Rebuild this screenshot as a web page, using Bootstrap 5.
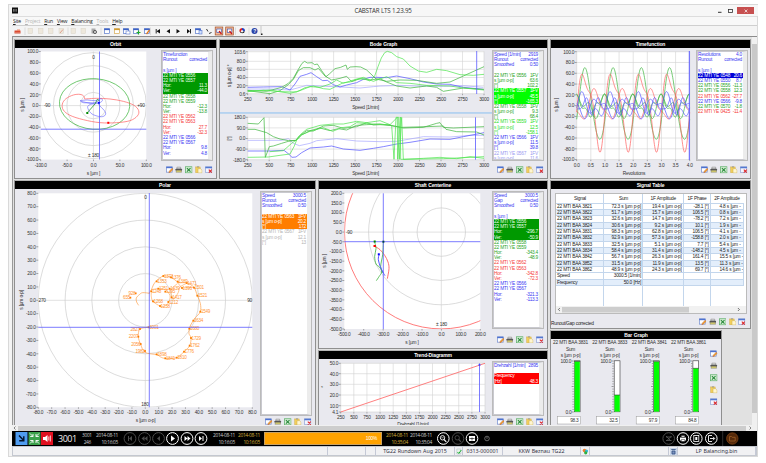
<!DOCTYPE html>
<html lang="en">
<head>
<meta charset="utf-8">
<title>CABSTAR LTS 1.23.95</title>
<link href="https://cdn.jsdelivr.net/npm/bootstrap@5.3.0/dist/css/bootstrap.min.css" rel="stylesheet">
<style>
html,body{width:766px;height:463px;overflow:hidden;background:#fff}
body{font-family:"Liberation Sans",Arial,sans-serif;font-size:4.8px;line-height:5.2px;letter-spacing:-.25px;word-spacing:.35px;color:#222}
svg{display:block;flex:none}
svg text{font-size:4.8px;letter-spacing:-.25px;word-spacing:.35px;fill:#333}
.win{width:750px;height:453px;margin:4px 0 0 8px;border:1px solid #d9d9d9;background:#f4f4f4;padding:0 0 0 3px}
.titlebar{height:11px;background:#f7f7f7;width:746px}
.titlebar .ttl{font:6.2px/11px "Open Sans","Noto Sans",sans-serif;letter-spacing:-.22px;color:#333}
.closebtn{width:17px;height:7px;background:#c75050}
.menus{height:9px;font:5.1px/9px "Open Sans",sans-serif;letter-spacing:-.18px;gap:3.9px;padding-left:1px;border-top:1px solid #ddd;background:#f8f8f8}
.menus u{text-decoration-thickness:.4px;text-underline-offset:.5px}
.tools{height:11px;border-top:1px solid #cfcfcf;background:#f4f4f4}
.work{height:389px;background:#e1e1e1;border-top:1px solid #8c8c8c;border-left:1px solid #999;width:745px;overflow:hidden}
.canvas{padding:2px 0 0 1px;gap:2px;width:739px;height:388px;overflow:hidden}
.pane{border:1px solid #8f8f8f;border-top-color:#b5b5b5;background:#e9e9ef;overflow:hidden;flex:none}
.hd{height:8px;background:#000;color:#fff;text-align:center;font:bold 5px/8px "Liberation Sans",sans-serif;letter-spacing:-.15px;flex:none}
.side{width:55px;padding:2.5px 4px 0 1px;flex:none}
.lgd{width:50px;background:#fff;border:1px solid #c9c9cf;border-right:4px solid #ececec;overflow:hidden;padding-top:.5px;flex:none;outline:.5px solid #bbb}
.lgd div{display:flex;justify-content:space-between;height:5.2px;padding:0 1px 0 0;white-space:nowrap}
.ics{gap:2.3px;padding:0 1px 0 3.5px}
.b{color:#3a3af2}.g{color:#2aa52a}.lg{color:#2ddd2d}.r{color:#f53c3c}.v{color:#9a9af0}.gy{color:#b4b4b4}
.hg{background:#090;color:#e8ffe8}.hl{background:#0f0;color:#fff}.hb{background:#0000d8;color:#fff}.ho{background:#ff7d00;color:#fff}.hr{background:#f00;color:#fff}
.vs{width:5px;background:#c9c9c9;border-top:7px solid #f0f0f0;border-bottom:12px solid #f0f0f0;flex:none}
.hs{height:6px;background:#f0f0f0;width:745px;font-size:5px;line-height:6px}
.hs .thumb{height:5px;background:#cdcdcd;width:728px}
.blackbar{height:15px;background:#000;width:745px;color:#ccc;letter-spacing:-.25px}
.blackbar>*{flex:none}
.blackbar .num{font:9px/15px "Open Sans",sans-serif;color:#eee;letter-spacing:-.5px;width:24px}
.stamp{font:4.8px/6.5px "Open Sans",sans-serif;letter-spacing:-.3px;text-align:right;white-space:nowrap;width:22px}
.s1{width:9px}.s2{width:22px;margin:0 4px 0 5px}.s3{margin-left:1px}.s4{margin:0 4px 0 3px}.s5{margin:0 2px 0 4px}.s6{margin-right:2px}
.gold{color:#d9b13a}
.prog{width:118px;height:13px;background:#ffa200;border:1px solid #c9a264;color:#fff;text-align:right}
.status{height:10px;background:#f1f1f3;width:745px;font:5.3px/9px "Noto Sans",sans-serif;letter-spacing:0;border:1px solid #c4c8d0;color:#334}
.status>div{border-right:1px solid #c5c9d6;height:8px;text-align:center;white-space:nowrap;flex:none;display:flex;align-items:center;justify-content:center}
.tbl{margin:4px 0 0 4px;width:192px;height:121px;background:#fff;border:1px solid #bbb;flex:none}
.sig{width:188px;height:112px;overflow:hidden;background:linear-gradient(90deg,#0000 47.4px,#c3d6ec 47.4px 48px,#0000 48px 86.4px,#c3d6ec 86.4px 87px,#0000 87px 126.9px,#c3d6ec 126.9px 127.5px,#0000 127.5px 153.9px,#c3d6ec 153.9px 154.5px,#0000 154.5px)}
.sig tr{display:grid;grid-template-columns:48px 39px 40.5px 27px 33px;height:6.36px;border-bottom:.6px solid #c3d6ec}
.sig td,.sig th{padding:0 1px;text-align:right;font-weight:400;white-space:nowrap;overflow:hidden;line-height:6px;border-right:1px solid #c3d6ec}
.sig th{text-align:center;line-height:10px;border:0}
.sig tr.h{height:9.5px}
.sig td:first-child{text-align:left}
.sig td:last-child{text-align:left;padding-left:9px}
.sig .alt td{background:#e3eefb}
#topRow,#lowRow{gap:2px}
#orbit{width:203px;height:140px}#bode{width:329px;height:140px}#timef{width:201px;height:140px}
#polar{width:302px;height:247px}#shaft{width:230px;height:169px}#trend{width:230px;height:77px}
#signal{width:201px;height:149px;margin-top:1px}#bars{width:172px;height:97px;margin-top:1px}
#sigfoot span{align-self:flex-end;padding-top:7px}
#sigfoot .ics{padding:4px 4px 0 0}
.baricons{gap:4.4px;padding:11px 0 0 1px}
</style>
<script src="https://cdn.jsdelivr.net/npm/bootstrap@5.3.0/dist/js/bootstrap.bundle.min.js"></script>
</head>
<body>
<svg width="0" height="0" class="position-absolute"><defs>
<symbol id="i-edit" viewBox="0 0 8 8"><rect x=".5" y="1" width="6" height="5.5" fill="#fff" stroke="#6a86cc" stroke-width=".7"/><rect x=".3" y=".7" width="6.5" height="1.6" fill="#4d72d0"/><path d="M3 7l.4-1.600L6.400 2.400l1.200 1.100-3 3z" fill="#f0a030" stroke="#b8552c" stroke-width=".4"/></symbol>
<symbol id="i-print" viewBox="0 0 8 8"><path d="M2 1.200h4v2H2z" fill="#ddd" stroke="#777" stroke-width=".5"/><rect x=".6" y="2.800" width="6.800" height="2.200" rx=".6" fill="#555"/><path d="M1.500 4.600h5l.5 2h-6z" fill="#d8cf6a" stroke="#666" stroke-width=".4"/></symbol>
<symbol id="i-xls" viewBox="0 0 8 8"><rect x=".6" y=".8" width="6.800" height="6.400" fill="#d8efd8" stroke="#5fb06a" stroke-width=".8"/><path d="M2 2.200l3.800 3.800M5.800 2.200L2 6" stroke="#2b8a3c" stroke-width="1.200"/></symbol>
<symbol id="i-clip" viewBox="0 0 8 8"><rect x=".8" y="1" width="4.600" height="6" fill="#f3cf5a" stroke="#d0aa3a" stroke-width=".5"/><rect x="2" y=".4" width="2.200" height="1.100" fill="#999"/><path d="M3.200 2.800h2.600l1.600 1.500v3H3.200z" fill="#fff6d0" stroke="#c9b05a" stroke-width=".5"/></symbol>
<symbol id="i-del" viewBox="0 0 8 8"><rect x=".6" y="1" width="6.600" height="5.600" fill="#f4f6ff" stroke="#7d94d0" stroke-width=".6"/><rect x=".4" y=".7" width="7" height="1.700" fill="#5478d0"/><path d="M4 3.800l3.200 3.200M7.200 3.800L4 7" stroke="#e02828" stroke-width="1.100"/></symbol>
</defs></svg>

<div class="win d-flex flex-column">
  <div class="titlebar d-flex align-items-center">
    <svg width="6" height="7" viewBox="0 0 6 7" class="flex-shrink-0"><rect y=".5" width="6" height="6" fill="#111"/><path d="M1 2.800h4M1 4h4" stroke="#ddd" stroke-width=".7" stroke-dasharray="1 .4"/></svg>
    <div class="ttl flex-fill text-center ps-4 ms-2">CABSTAR LTS 1.23.95</div>
    <svg width="21" height="8" viewBox="0 0 21 8"><path d="M2 5.300h3.500" stroke="#333"/><rect x="12.500" y="2.500" width="4" height="3" fill="none" stroke="#333" stroke-width=".8"/></svg>
    <div class="closebtn d-flex align-items-center justify-content-center me-1"><svg width="4" height="4" viewBox="0 0 4 4"><path d="M.6.6l2.800 2.800M3.400.6L.6 3.400" stroke="#fff" stroke-width=".7"/></svg></div>
  </div>
  <div class="menus d-flex"><span><u>S</u>ite</span><span class="gy"><u>P</u>roject</span><span><u>R</u>un</span><span><u>V</u>iew</span><span><u>B</u>alancing</span><span class="gy"><u>T</u>ools</span><span><u>H</u>elp</span></div>
  <div class="tools"><svg id="tb" width="260" height="11" viewBox="12 25 260 11"></svg></div>

  <div class="work d-flex">
    <div class="canvas d-flex">
      <div class="d-flex flex-column flex-shrink-0" style="gap:1px">
        <div class="d-flex" id="topRow">
          <section class="pane" id="orbit"></section>
          <section class="pane" id="bode"></section>
        </div>
        <div class="d-flex" id="lowRow">
          <section class="pane" id="polar"></section>
          <div class="d-flex flex-column" style="gap:1px">
            <section class="pane" id="shaft"></section>
            <section class="pane" id="trend"></section>
          </div>
        </div>
      </div>
      <div class="d-flex flex-column flex-shrink-0">
        <section class="pane" id="timef"></section>
        <section class="pane" id="signal">
          <div class="hd">Signal Table</div>
          <div class="tbl">
            <div class="sig"><table><tbody id="rows"></tbody></table></div>
            <svg width="190" height="7" viewBox="0 0 190 7"><rect width="190" height="7" fill="#f1f1f1"/><rect x="6" y="1" width="127" height="5.500" fill="#cdcdcd"/><path d="M3.800 2.100L2.400 3.500l1.400 1.400M182 2.100l1.400 1.400-1.400 1.400" fill="none" stroke="#444" stroke-width=".8"/></svg>
          </div>
          <div class="d-flex justify-content-between" id="sigfoot"><span>Runout/Gap corrected</span></div>
        </section>
        <section class="pane" id="bars"></section>
      </div>
    </div>
    <div class="vs"></div>
  </div>
  <div class="hs d-flex align-items-center"><svg width="6" height="6" viewBox="0 0 6 6"><path d="M3.500 1.500L2 3l1.500 1.500" fill="none" stroke="#555" stroke-width=".7"/></svg><div class="thumb"></div><svg width="8" height="6" viewBox="0 0 8 6"><path d="M3.500 1.500L5 3 3.500 4.500" fill="none" stroke="#555" stroke-width=".7"/></svg></div>

  <div class="blackbar d-flex align-items-center">
    <svg id="modes" width="46" height="15" viewBox="12 432 46 15"></svg>
    <div class="num">3001</div>
    <div class="stamp s1">3001<br>246</div>
    <div class="stamp s2">2014-08-11<br>10:16:05</div>
    <svg id="play" width="90" height="15" viewBox="122 432 90 15"></svg>
    <div class="stamp s3">2014-08-11<br>10:16:05</div>
    <div class="stamp gold s4">2014-08-11<br>10:16:05</div>
    <div class="prog pe-1 lh-1 pt-1">100%</div>
    <div class="stamp gold s5">2014-08-11<br>10:35:04</div>
    <div class="stamp s6">2014-08-11<br>10:35:04</div>
    <svg id="rt" width="322" height="15" viewBox="434 432 322 15"></svg>
  </div>
  <div class="status d-flex" id="status"></div>
</div>

<script>
const $=id=>document.getElementById(id);
const T=(x,y,s,a='middle',ex='')=>`<text x="${x}" y="${y}" text-anchor="${a}" ${ex}>${s}</text>`;
const L=(x1,y1,x2,y2,c,w=.6)=>`<path d="M${x1} ${y1}L${x2} ${y2}" stroke="${c}" stroke-width="${w}" fill="none"/>`;
const C=(x,y,r,c='#c4c4c4',w=.6)=>`<ellipse cx="${x}" cy="${y}" rx="${r}" ry="${r}" fill="none" stroke="${c}" stroke-width="${w}"/>`;
// curve given in thirds of a pixel from an origin
const P=(ox,oy,c,s,w=.7,smooth=false)=>{const p=s.trim().split(/\s+/).map(q=>q.split(',').map(Number)).map(([x,y])=>[ox+x/3,oy+y/3]);
  let d='M'+p[0];
  if(smooth){for(let i=0;i<p.length-1;i++){const a=p[i-1]||p[i],b=p[i],e=p[i+1],f=p[i+2]||e;
    d+=`C${b[0]+(e[0]-a[0])/6} ${b[1]+(e[1]-a[1])/6} ${e[0]-(f[0]-b[0])/6} ${e[1]-(f[1]-b[1])/6} ${e[0]} ${e[1]}`}}
  else d+='L'+p.slice(1).join('L');
  return `<path d="${d}" fill="none" stroke="${c}" stroke-width="${w}"/>`};
const five=['edit','print','xls','clip','del'].map(n=>`<svg width="7.600" height="7.600"><use href="#i-${n}"/></svg>`).join('');
const icons=`<div class="ics d-flex">${five}</div>`;
function axes(x0,y0,x1,y1,xt,yt,grid){
  let s=`<rect x="${x0}" y="${y0}" width="${x1-x0}" height="${y1-y0}" fill="#fff"/>`;
  xt.forEach((t,i)=>{const x=t.x??x0+(x1-x0)*i/(xt.length-1);if(grid)s+=L(x,y0,x,y1,'#d2d2d2');s+=L(x,y1,x,y1+1.500,'#555',.5)+T(x,y1+7,t.t??t)});
  yt.forEach((t,i)=>{const y=t.y??y0+(y1-y0)*i/(yt.length-1);if(grid)s+=L(x0,y,x1,y,'#d2d2d2');s+=L(x0-2,y,x0,y,'#555',.5)+T(x0-2.600,y+1.800,t.t??t,'end')});
  return s}
const rot=(x,y,s)=>T(0,0,s,'middle',`transform="translate(${x} ${y}) rotate(-90)"`);
function legend(rows){return rows.map(([c,a,b=''])=>`<div class="${c}"><span>${a||'&nbsp;'}</span><span>${b}</span></div>`).join('')}
function pane(id,title,x,y,w,h,g,lg,lh,gap){
  $(id).innerHTML=`<div class="hd">${title}</div><div class="d-flex"><svg width="${w}" height="${h}" viewBox="${x} ${y} ${w} ${h}">${g}</svg><div class="side"><div class="lgd" style="height:${lh}px">${legend(lg)}</div><div style="height:${gap}px"></div>${icons}</div></div>`}
const clip=(id,x,y,w,h,s)=>`<clipPath id="${id}"><rect x="${x}" y="${y}" width="${w}" height="${h}"/></clipPath><g clip-path="url(#${id})">${s}</g>`;
const seq=(a,b,st,f=1)=>{const r=[];for(let v=a;st>0?v<=b+1e-6:v>=b-1e-6;v+=st)r.push(v.toFixed(f));return r};
const G='#3cb43c',LG='#4ce44c',R='#ff6060',B='#5252ff',V='#a8a8ff',X='#5a5aff';

// Orbit
{const cx=93.4,cy=105.6;let s=axes(40.700,51.500,146.300,159.600,seq(-100,100,50),seq(100,-100,-20));
s+=clip('c1',40.700,51.500,105.600,108.100,[13.200,26.500,40,53].map(r=>C(cx,cy,r)).join('')+L(cx,51,cx,160,'#ccc')+L(40,cy,147,cy,'#ccc')
+`<ellipse cx="94.600" cy="104" rx="35.200" ry="25.300" transform="rotate(4 94.6 104)" fill="none" stroke="${G}" stroke-width=".7"/>`
+P(0,0,R,'254,297 251,288 240,283 220,285 198,296 187,312 190,330 210,346 250,359 300,368 350,368 390,362 412,348 416,332 402,316 370,304 330,297 290,295 254,297',.7,true)
+P(0,0,B,'240,302 262,300 285,302 303,296 307,302 296,309 270,308 250,308 240,302',.55,true)
+P(0,0,B,'244,304 280,312 292,309 300,318 316,336 314,347 300,350 276,342 264,326 266,316 290,306 300,300',.55,true)
+P(0,0,'#2a9d2a','262,338 285,312 292,298 300,304',.8)
+L(99.500,51,99.500,160,X,.8)+L(40,129.200,147,129.200,X,.8)
+'<rect x="86.300" y="112" width="2" height="2" fill="#080"/><rect x="107.300" y="121.800" width="2" height="2" fill="#f00"/><rect x="98" y="102" width="1.800" height="1.800" fill="#00f"/>');
s+=T(93.500,58.500,'0')+T(47,107.400,'-90')+T(141,107.400,'+90')+T(93.500,156.500,'± 180')+rot(24,105,'s [µm ]')+T(93.500,174.500,'s [µm ]');
pane('orbit','Orbit',15,48,146,130,s,[['b','Timefunction'],['b','Runout','corrected'],['b',''],['b','s [µm ]'],['hg','22 MTI YE 0556'],['hg','22 MTI YE 0557'],['hg','Hor:','11.3'],['hg','Ver:','-44.0'],['g','22 MTI YE 0558'],['g','22 MTI YE 0559'],['g','Hor:','-12.3'],['g','Ver:','-13.8'],['r','22 MTI YE 0562'],['r','22 MTI YE 0563'],['r','Hor:','27.7'],['r','Ver:','-32.3'],['b','22 MTI YE 0566'],['b','22 MTI YE 0567'],['b','Hor:','9.8'],['b','Ver:','4.8']],109.500,6)}

// Bode graph
{const xt=seq(250,3000,250,0);
let s=axes(247.700,51.200,484,93.700,xt,[{t:'103.6',y:51.700},{t:'80.0',y:61.300},{t:'60.0',y:69.300},{t:'40.0',y:77.500},{t:'20.0',y:85.700},{t:'0.6',y:93.700}],true);
s+=P(210,0,V,'113,267 180,267 240,270 262,264 290,256 330,258 390,261 450,264 490,260 510,258 540,257 570,256 620,258 660,258 700,259 760,257 820,262')
+P(210,0,B,'113,262 160,261 215,260 240,270 255,252 270,229 290,223 303,218 320,230 338,242 352,241 370,254 390,261 410,255 440,248 460,238 480,232 500,232 530,233 560,228 600,236 640,246 680,252 720,253 760,262 820,268')
+P(210,0,G,'113,271 170,274 215,262 235,250 250,235 262,213 276,190 284,184 292,189 306,188 314,194 322,192 335,212 348,230 358,222 375,206 392,202 408,195 412,208 420,201 438,200 452,201 470,210 486,225 498,237 530,244 570,240 620,241 680,250 720,246 760,228 822,200')
+P(210,0,G,'113,272 180,281 210,272 235,254 250,238 265,212 280,203 300,203 315,210 325,205 345,228 365,240 390,235 410,229 425,245 450,236 480,240 510,236 530,246 560,258 600,264 650,258 680,262 700,274 760,264 822,268')
+P(210,0,LG,'113,275 160,271 210,275 260,276 285,263 310,258 340,266 360,268 380,258 400,248 420,246 440,238 460,236 480,243 494,228 504,200 514,174 524,158 532,154 545,158 560,170 580,177 600,198 625,213 650,217 680,208 710,212 750,224 790,226 822,223')
+P(210,0,LG,'113,273 180,270 240,280 270,272 300,260 330,262 360,252 380,240 400,250 430,240 460,232 490,244 530,230 560,248 600,250 650,256 720,258 760,264 822,270')
+L(476.700,51,476.700,94,X,.8);
s+=rot(231,76,'s [µm o-p] *')+T(365.500,108.700,'Speed [1/min]');
s+=`<rect x="220" y="112.200" width="272" height="1.500" fill="#a9cdf0"/>`;
s+=axes(247.700,117.300,484,159.700,xt,['180.0','90.0','0.0','-90.0','-180.0'],true);
s+=P(210,0,V,'113,421 215,421 235,416 250,430 268,437 300,430 320,422 380,416 440,423 510,425 560,424 640,410 720,411 780,406 822,406')
+P(210,0,B,'113,453 180,453 222,451 236,462 246,472 258,471 275,458 300,444 340,441 365,438 400,447 450,451 490,445 520,440 560,432 600,427 660,417 720,418 760,410 822,398')
+P(210,0,G,'113,370 145,372 162,353 166,472 178,440 190,438 215,430 235,424 258,421 268,408 290,392 310,393 340,378 370,376 400,385 440,380 470,368 490,375 510,374 540,376 580,384 640,382 680,370 690,368 700,382 730,384 822,380')
+P(210,0,G,'113,388 135,388 170,398 190,410 210,417 235,422 258,421 275,405 300,392 330,384 360,392 385,386 410,390 440,376 470,374 510,372 540,376 575,382 650,380 700,378 708,388 740,395 800,396 822,405')
+P(210,0,LG,'113,472 175,471 210,466 240,462 252,440 262,415 272,403 290,388 330,376 370,372 400,372 440,364 470,368 510,362 545,376 552,478 558,352 566,352 568,478 575,352 580,478 640,475 690,472 740,476 780,470 822,475')
+P(210,0,LG,'180,455 220,452 245,430 262,418 275,404 300,394 340,383 368,394 395,383 420,380 440,368 480,372 540,374 562,352 563,478 571,351 572,478 700,476 822,470')
+L(475.500,117.300,475.500,159.700,X,.8);
s+=rot(230.500,138.500,'[°]')+T(365.500,174.500,'Speed [1/min]');
pane('bode','Bode Graph',220,48,272,130,s,[['b','Speed [1/min]','2919'],['b','Runout','corrected'],['b','Smoothed','0.50'],['b',''],['g','22 MTI YE 0556','1FV'],['g','s [µm o-p]','63.6'],['g','[°]','102.2'],['hl','22 MTI YE 0557','1FV'],['hl','s [µm o-p]','45.5'],['hl','[°]','-165.3'],['g','22 MTI YE 0558','1FV'],['g','s [µm o-p]','9.3'],['g','[°]','68.4'],['lg','22 MTI YE 0559','1FV'],['lg','s [µm o-p]','12.5'],['lg','[°]','-158.1'],['b','22 MTI YE 0566','1FV'],['b','s [µm o-p]','11.5'],['b','[°]','39.8'],['v','22 MTI YE 0567','1FV'],['v','s [µm o-p]','11.6']],109.500,6)}

// Timefunction
{const x0=576.700,x1=689.700,y0=51.700,y1=159.600;
let s=axes(x0,y0,x1,y1,seq(0,4,.5),seq(100,-100,-20),true);
const f=(c,fn)=>{let d='';for(let i=0;i<=320;i++){const t=i/80;d+=(i?'L':'M')+(x0+(x1-x0)*t/4).toFixed(2)+' '+(105.600-fn(t*2*Math.PI)*.54).toFixed(2)}return `<path d="${d}" fill="none" stroke="${c}" stroke-width=".7"/>`};
const w=Math.cos,p=2*Math.PI;
s+=f(G,t=>66*w(t-.3*p)+5*w(2*t-.5*p))+f(R,t=>64*w(t-.29*p)+22*w(2*t-.2*p)-3)+f(R,t=>25*w(t-.65*p)+8*w(2*t-1))
+f(G,t=>14*w(t-.1*p)+12*w(2*t-.9*p))+f(G,t=>16*w(t-.95*p)+6*w(3*t))+f(B,t=>16*w(t-.2*p)+12*w(2*t-.35*p)-2)+f(B,t=>14*w(t-.75*p)+8*w(2*t-.1*p)-3)+f(B,t=>12*w(2*t-.6*p)+6*w(3*t-1));
s+=L(689.300,51,689.300,160,X,1)+rot(558,105,'s [µm ]')+T(634,174.500,'Revolutions');
pane('timef','Timefunction',551,48,145,130,s,[['b','Revolutions','4.0'],['b','Runout','corrected'],['b',''],['b','s [µm ]'],['hb','22 MTI YE 0548','20.6'],['b','22 MTI YE 0550','8.7'],['g','22 MTI YE 0556','-11.3'],['g','22 MTI YE 0558','12.3'],['r','22 MTI YE 0562','-27.7'],['b','22 MTI YE 0566','-9.8'],['g','22 MTI YE 0570','-1.8'],['r','22 MTI YE 0425','-11.4']],109.500,6)}

// Polar
{const cx=145.300,cy=300.300;let s=axes(38.300,193.300,252.300,407.300,seq(-80,80,10),seq(80,-80,-10));
s+=clip('c2',38.300,193.300,214,214,[26.700,53.500,80.200,107].map(r=>C(cx,cy,r)).join('')+L(cx,193,cx,408,'#ccc')+L(38,cy,253,cy,'#ccc'));
const O='#ffa04a';
s+=P(10,178,O,'386,382 380,372 379,360 388,350 398,344 420,346',.7,true)
+P(140,255,O,'26,115 34,105 40,90 50,77 70,63 93,67 115,82 128,83 142,84 162,97 172,122 181,145 181,170 166,188 160,197 152,210 148,221 147,236 153,249 149,272 132,290 110,308 76,310 62,306 50,299 15,292 2,268 -5,245 0,222 26,217',.7,true)
+P(140,255,O,'162,97 142,98 126,99 115,86 114,76M'.replace('M',''),.6)
+P(140,255,O,'142,84 120,96 115,112 102,132 95,127 93,112 96,100 112,86',.6,true)
+P(140,255,O,'34,104 55,101 76,104 90,122 86,142 76,152 60,153 39,139 34,125 34,112',.6,true);
[[-13,115,'928','e'],[-29,128,'655','e'],[50,79,1353],[70,63,1373],[93,67,1376],[140,84,1471],[113,80,1389],[126,99,1396],[162,98,1501],[172,122,1521],[181,170,1549],[160,197,1634],[148,221,1680],[153,249,1729],[149,272,1762],[132,290,1776],[110,308,1810],[76,310,1841],[50,298,1898],[15,288,1982,'e'],[2,267,2056,'e'],[-5,245,2207,'e'],[0,222,2827,'e'],[26,217,3001],[55,101,1251],[89,101,1439],[95,127,1417],[85,141,1212],[60,153,1238],[39,139,1268],[76,110,1295],[34,109,1248]].forEach(([x,y,t,e])=>{x=140+x/3;y=255+y/3;s+=`<rect x="${x-.9}" y="${y-.9}" width="1.800" height="1.800" fill="#ff7d00"/>`+T(e?x-.3:x+.6,y+1.800,t,e?'end':'start','style="fill:#ff9638;font-size:4.6px"')});
s+=L(149.300,193,149.300,407.300,X,.8)+L(38.300,327.300,252.300,327.300,X,.8);
s+=T(145.500,199,'0')+T(38.500,302,'270','start')+T(252,302,'90','end')+T(145,405.500,'180')+rot(23,300,'s [µm o-p]')+T(145.500,422,'s [µm o-p]');
pane('polar','Polar',15,189,245,237,s,[['b','Speed','3000.5'],['b','Runout','corrected'],['b','Smoothed','0.50'],['b',''],['ho','22 MTI YE 0563','1FV'],['ho','s [µm o-p]','20.2'],['ho','[°]','172'],['gy','22 MTI YE 0567','1FV'],['gy','s [µm o-p]','12.1'],['gy','[°]','13']],223,3.500)}

// Shaft centerline
{const cx=441.300,cy=232.100;let s=axes(344.300,193.300,480.300,329,seq(-500,200,100),seq(200,-500,-50));
s+=clip('c3',344.300,193.300,136,136,[24.200,48.400,72.700].map(r=>C(cx,cy,r)).join('')+C(cx,cy,96.800,'#ff5a5a',.8)+L(cx,193,cx,330,'#ccc')+L(344,cy,481,cy,'#ccc'));
s+=P(315,178,R,'179,205 195,215 209,232 219,252 222,272 217,302',.9,true)+P(315,178,G,'179,192 183,212 179,235 183,258 194,268 200,282 192,296 184,308',.8,true)+P(315,178,G,'205,192 203,230 197,266 204,285',.8,true)+P(315,178,B,'192,230 190,245 196,266 204,283 210,293',1,true)
+L(383.300,193.300,383.300,329,X,.8)+L(344.300,241.700,480.300,241.700,X,.8)
+'<rect x="373.500" y="245" width="2.400" height="2" fill="#f00"/><rect x="373.700" y="240.500" width="2" height="2" fill="#080"/><rect x="382.400" y="240.700" width="2" height="2" fill="#044"/><rect x="377.800" y="253.300" width="2" height="2" fill="#00f"/>';
s+=T(346,234,'-90','start')+T(441.500,326,'± 180')+rot(325.500,261,'s [µm ]')+T(412,344,'s [µm ]');
pane('shaft','Shaft Centerline',319,189,173,159,s,[['b','Speed','3000.5'],['b','Gap','corrected'],['b','Smoothed','0.50'],['b',''],['b','s [µm ]'],['hg','22 MTI YE 0556'],['hg','22 MTI YE 0557'],['hg','Hor:','-296.7'],['hg','Ver:','-50.9'],['g','22 MTI YE 0558'],['g','22 MTI YE 0559'],['g','Hor:','-343.4'],['g','Ver:','-48.9'],['r','22 MTI YE 0562'],['r','22 MTI YE 0563'],['r','Hor:','-342.8'],['r','Ver:','-72.3'],['b','22 MTI YE 0566'],['b','22 MTI YE 0567'],['b','Hor:','-321.3'],['b','Ver:','-113.3']],136,8)}

// Trend
{let s=axes(340.700,363.300,485,412,seq(250,3000,250,0),[{t:'50.0',y:363.300},{t:'40.0',y:373.700},{t:'30.0',y:384.300},{t:'20.0',y:395},{t:'10.0',y:405.700},{t:'4.1',y:412}],true);
s+=L(340.700,412,485,363.300,R,.8)+L(479.500,363.300,479.500,412,X,.8)+'<rect x="478.600" y="364" width="1.800" height="1.800" fill="#44f"/>'+T(413,425.500,'Drehzahl [1/min]')+rot(324.500,387,'*');
pane('trend','Trend-Diagramm',319,359,173,67,s,[['b','Drehzahl [1/min]','2895'],['b',''],['hr','Frequency'],['hr','[Hz]','48.3']],53,3)}

// Signal table
const D=[['3821','72.3','19.4','-28.1','4.8'],['3822','51.7','15.7','106.5','0.8'],['3823','32.6','14.7','-78.2','7.2'],['3824','30.6','9.2','10.1','1.9'],['3831','98.3','62.8','106.5','4.1'],['3832','92.9','57.3','-158.8','2.0'],['3833','32.5','5.1','7.7','5.4'],['3834','58.4','31.4','-148.2','4.5'],['3842','56.7','26.3','161.4','15.5'],['3852','31.5','11.9','13.5','11.3'],['3862','48.9','24.3','69.7','14.6']];
$('rows').innerHTML='<tr class="h"><th>Signal</th><th>Sum</th><th>1F Amplitude</th><th>1F Phase</th><th>2F Amplitude</th></tr>'+D.map((r,i)=>`<tr class="${i%2?'alt':''}"><td>22 MTI BAA ${r[0]}</td><td>${r[1]} s [µm p-p]</td><td>${r[2]} s [µm o-p]</td><td>${r[3]} [°]</td><td>${r[4]} s [µm -</td></tr>`).join('')+'<tr><td>Speed</td><td>3000.5 [1/min]</td><td></td><td></td><td></td></tr><tr class="alt"><td>Frequency</td><td>50.0 [Hz]</td><td></td><td></td><td></td></tr>';
$('sigfoot').insertAdjacentHTML('beforeend',icons);

// Bar graph
{let s='';[[570.500,574.300,'3831',98.300],[609.700,614.200,'3833',32.500],[649.200,653.600,'3841',97.900],[688.500,692.900,'3861',84.800]].forEach(([c,x,n,v])=>{
s+=T(c,344,'22 MTI BAA '+n)+T(c,350.500,'Sum')+T(c,357,'s [µm p-p]')+T(x-3,363,'100.0','end')+T(x-3,414,'0.0','end');
for(let i=0;i<=20;i++)s+=L(x-(i%10?1.800:2.600),361+i*2.550,x-.6,361+i*2.550,'#444',.5);
const h=51*v/100;s+=`<rect x="${x}" y="360.800" width="5.800" height="51" fill="#fff" stroke="#333" stroke-width=".6"/><rect x="${x+.3}" y="${411.600-h}" width="5.200" height="${h}" fill="#0f0"/>`+L(x,411.600-h,x+5.800,411.600-h,'#242',.6)
+`<rect x="${c-13}" y="416.500" width="23" height="7.500" fill="#fff" stroke="#999" stroke-width=".5"/>`+T(c+8,422.200,v.toFixed(1),'end')});
$('bars').innerHTML=`<div class="hd">Bar Graph</div><div class="d-flex"><svg width="158" height="88" viewBox="551 339 158 88">${s}</svg><div class="d-flex flex-column baricons">${five}</div></div>`}

// Toolbar
{const W=(x,c='#3c62c4')=>`<rect x="${x-2.500}" y="27.800" width="5" height="4.800" fill="#fff" stroke="${c}" stroke-width=".6"/><rect x="${x-2.800}" y="27.500" width="5.600" height="1.600" fill="${c}"/>`;
let s='<path d="M14.500 29.500h6v3h-6z" fill="#d94a32"/><path d="M17 28.500h3v1.500h-3z" fill="#f08a6a"/><path d="M15 31.800h5" stroke="#f5c0b0" stroke-width=".5"/>';
[30,40.500,50.500,61,73,83].forEach((x,i)=>s+=`<rect x="${x-2}" y="27.500" width="4.500" height="5" fill="#eee8dc" stroke="#d8d2c6" stroke-width=".5"/>`+(i==3?L(x-1,32,x+2,28.500,'#e0a090',1):''));
s+='<rect x="91.500" y="27.500" width="4" height="5" fill="#aaa"/><circle cx="95" cy="31" r="1.600" fill="#ccc" stroke="#333" stroke-width=".7"/>';
s+=W(107)+W(117,'#d09a30')+W(126)+'<rect x="126" y="30" width="4" height="3" fill="#fff" stroke="#3c62c4" stroke-width=".5"/>'+W(136)+'<path d="M138.500 29.500v4M136.500 31.500h4" stroke="#20a830" stroke-width="1.200"/>'+W(147)+L(146.500,33,149.500,29,'#e07a20',1.300);
s+='<path d="M160 28v4.500l-3.500-2.200zM170 28v4.500l-3.500-2.200zM176.500 28v4.500l3.500-2.200zM187 28v4.500l3-2.200z" fill="#111"/><path d="M156.200 28v4.500M190.500 28v4.500" stroke="#111" stroke-width=".9"/>';
s+=W(198)+'<rect x="199" y="29.500" width="3" height="3.500" fill="#cfe0ff" stroke="#3c62c4" stroke-width=".5"/><path d="M206.500 28l1.500 2.500M209 32.500l2.500-1" stroke="#333"/>';
[219,229.500].forEach(x=>s+=`<rect x="${x-3.800}" y="26" width="7.600" height="8" fill="#f3b896" stroke="#a0502a" stroke-width=".7"/><rect x="${x-2.200}" y="28" width="4.500" height="3.500" fill="#fff" stroke="#4458b0" stroke-width=".7"/><path d="M${x} 30l2.500 3" stroke="#d01818" stroke-width="1.200"/>`);
s+='<path d="M242 27a3 3 0 0 0-2.500 3.500l1.500.5a1.500 1.500 0 0 1 1-2z" fill="#e02020"/><path d="M242 27a3 3 0 0 1 3 3l-1.600.4A1.500 1.500 0 0 0 242 29z" fill="#2040c0"/><path d="M239.500 30.500a3 3 0 0 0 5.500 0l-1.600 0a1.500 1.500 0 0 1-2.400.5z" fill="#111"/><circle cx="254.500" cy="30" r="3" fill="#2a44a8"/>'+T(254.500,31.900,'?','middle','style="fill:#fff;font-weight:bold"')+'<path d="M261 25v9" stroke="#aaa" stroke-width=".6"/><rect x="261" y="32.500" width="1.500" height="1.500" fill="#222"/>';
[25,68,101,150.500,235.500,249].forEach(x=>s+=L(x,26.500,x,34,'#c4c4c4',.5));
$('tb').innerHTML=s}

// Bottom control bar
{$('modes').innerHTML='<rect x="15.500" y="433" width="12" height="13" fill="#4f9cf0"/><path d="M19 436.500l4 4.200M23.800 437.200v4.500h-4.600" stroke="#03122a" stroke-width="1.400" fill="none"/><rect x="28.500" y="433" width="12" height="13" fill="#3aa04a"/><path d="M30 434.500l3 3v-2.500m0 2.500h-2.800M39 434.500l-3 3v-2.500m0 2.500h2.800M30 444.500l3-3v2.500m0-2.500h-2.800M39 444.500l-3-3v2.500m0-2.500h2.800" stroke="#fff" stroke-width=".9" fill="none"/><rect x="41" y="433" width="12" height="13" fill="#e01020"/><path d="M43 438h2l2.500-2v7l-2.500-2h-2z" fill="#fff"/><path d="M48.800 437.500v4M50.300 436.500v6" stroke="#fff" stroke-width=".8"/>';
const pl=[['M132 437v5l-3-2.500z','M128.500 437v5'],['M144.500 437v5l-3-2.500zM147.500 437v5l-3-2.500z'],['M160 437v5l-3-2.500z'],['M171 436.500v6l4-3z'],['M184.500 437v5l3-2.500zM187.500 437v5l3-2.500z'],['M199 437v5l3-2.500z','M203 437v5']];
$('play').innerHTML=[130,144.500,158.500,172.500,187,201].map((x,i)=>{const c=i<3?'#4c4c4c':'#fff';return `<circle cx="${x}" cy="439.500" r="5.900" fill="none" stroke="${c}" stroke-width="1"/><path d="${pl[i][0]}" fill="${c}"/>`+(pl[i][1]?`<path d="${pl[i][1]}" stroke="${c}"/>`:'')}).join('');
let r=[[443.300,'#fff'],[458,'#4c4c4c'],[472,'#fff'],[668.700,'#4c4c4c'],[683,'#fff'],[696.300,'#fff'],[711.300,'#fff']].map(([x,c])=>`<circle cx="${x}" cy="439.500" r="5.800" fill="none" stroke="${c}" stroke-width="1"/>`).join('');
[[443,'#fff'],[457.700,'#4c4c4c']].forEach(([x,c])=>r+=`<circle cx="${x-.5}" cy="438.800" r="2.200" fill="none" stroke="${c}" stroke-width=".9"/><path d="M${x+1} 440.500l2.300 2.300" stroke="${c}" stroke-width="1.200"/>`);
r+='<path d="M441.300 438.800h2.400" stroke="#fff" stroke-width=".6"/><rect x="469" y="437" width="6" height="5" fill="#fff"/><path d="M469.500 439.500h5M472 438.500v3" stroke="#000" stroke-width=".6"/><circle cx="487" cy="439.500" r="2.300" fill="none" stroke="#aaa" stroke-width=".6"/><path d="M487 438.300v1.300" stroke="#ccc" stroke-width=".7"/>'
+'<path d="M666 437l5 5M671.500 437l-5 5M666 438h5.500M666 441.500h5.500" stroke="#555" stroke-width=".9"/><path d="M680 438.500h6v3h-6z" fill="#fff"/><path d="M681.300 436.500h3.500v1.500h-3.500zM681.300 440.500h3.500v2h-3.500z" fill="#fff" stroke="#000" stroke-width=".4"/><rect x="693.800" y="436.500" width="5" height="6" fill="none" stroke="#fff" stroke-width=".8"/><path d="M695.300 438h2v3h-2z" fill="#fff"/><path d="M712 436.500h-3.500v6h3.500M710 439.500h4.500M713 437.800l1.700 1.700-1.700 1.700" fill="none" stroke="#fff" stroke-width=".9"/><path d="M722.700 432v15" stroke="#444" stroke-width=".7"/><circle cx="732.300" cy="439.500" r="5.700" fill="#54290a" stroke="#7c4012" stroke-width=".8"/><path d="M729.500 437.500h2l.7.800h3v3.700h-5.700z" fill="none" stroke="#a86428" stroke-width=".7"/>';
$('rt').innerHTML=r}
$('status').innerHTML=[[315,''],[38,''],[10,''],[79,'TG22 Rundown Aug 2015'],[8,'<svg width="6" height="7" viewBox="0 0 6 7"><path d="M.8 1h4v5h-4z" fill="#e8f4e8" stroke="#9ab" stroke-width=".4"/><path d="M1.500 4l1.300 1.500L5.300 2" fill="none" stroke="#18b030"/></svg>'],[40,'0313-000001'],[78,'KKW Beznau TG22'],[9,'<svg width="7" height="7" viewBox="0 0 7 7"><circle cx="2.500" cy="2.500" r="1.800" fill="#f08030"/><circle cx="4.500" cy="3" r="1.600" fill="#30b8d8"/><circle cx="3.700" cy="4.800" r="1.600" fill="#30b040"/></svg>'],[79,''],[9,'<svg width="7" height="7" viewBox="0 0 7 7"><rect width="7" height="7" fill="#c9d6ea"/><path d="M1.300 1.500h4.400M2 3h3v3H2z" stroke="#334f80" stroke-width=".8" fill="#7d94c0"/></svg>'],[78,'LP Balancing.bin']].map(([w,t])=>`<div style="width:${w}px">${t}</div>`).join('');
</script>
</body>
</html>
